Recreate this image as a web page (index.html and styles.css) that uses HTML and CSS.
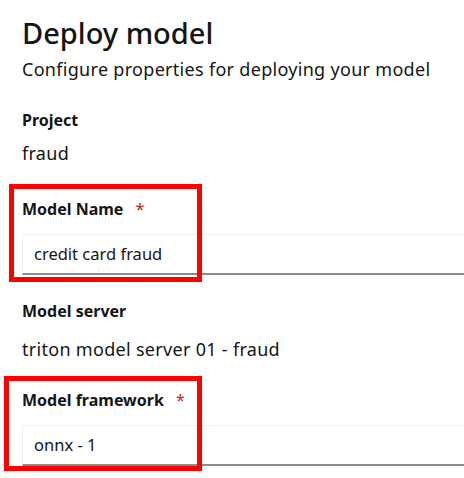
FILE: index.html
```html
<!DOCTYPE html>
<html>
<head>
<meta charset="utf-8">
<link rel="stylesheet" href="styles.css">
</head>
<body>
<div class="page">
  <h1 class="title">Deploy model</h1>
  <p class="subtitle">Configure properties for deploying your model</p>

  <div class="group g-project">
    <div class="label">Project</div>
    <div class="value v-project">fraud</div>
  </div>

  <div class="group g-name">
    <div class="label">Model Name <span class="req">*</span></div>
    <div class="input">credit card fraud</div>
    <div class="highlight hl-name"></div>
  </div>

  <div class="group g-server">
    <div class="label">Model server</div>
    <div class="value v-server">triton model server 01 - fraud</div>
  </div>

  <div class="group g-fw">
    <div class="label">Model framework <span class="req">*</span></div>
    <div class="input">onnx - 1</div>
    <div class="highlight hl-fw"></div>
  </div>
</div>
</body>
</html>
```

FILE: styles.css
```css
html {
  overflow: hidden;
  background: #ffffff;
}
body {
  margin: 0;
  padding: 0;
  font-family: "Noto Sans", "Open Sans", sans-serif;
  color: #151515;
}
.page {
  padding: 12px 0 24px 22px;
}
.title {
  margin: 0;
  font-size: 29px;
  font-weight: 500;
  line-height: 42px;
}
.subtitle {
  margin: 3px 0 0;
  font-size: 18px;
  letter-spacing: 0.3px;
  line-height: 24px;
}
.group {
  position: relative;
}
.g-project { margin-top: 27px; }
.g-name { margin-top: 32px; }
.g-server { margin-top: 24px; }
.g-fw { margin-top: 27px; }
.label {
  font-size: 16px;
  font-weight: 700;
  line-height: 24px;
}
.req {
  color: #c9190b;
  margin-left: 8px;
  font-weight: 400;
}
.value {
  font-size: 18px;
  line-height: 24px;
  letter-spacing: 0.3px;
}
.v-project { margin-top: 9px; }
.v-server { margin-top: 14px; }
.input {
  margin-top: 13px;
  height: 41px;
  box-sizing: border-box;
  border: 1px solid #f0f0f0;
  border-bottom: 2px solid #8a8d90;
  border-right: none;
  padding: 0 0 0 11px;
  font-size: 16.5px;
  line-height: 38px;
}
.highlight {
  position: absolute;
  border: 5px solid #ff0000;
  pointer-events: none;
}
.hl-name { left: -13px; top: -13px; width: 183px; height: 88px; }
.hl-fw { left: -18px; top: -12px; width: 188px; height: 85px; }
```
